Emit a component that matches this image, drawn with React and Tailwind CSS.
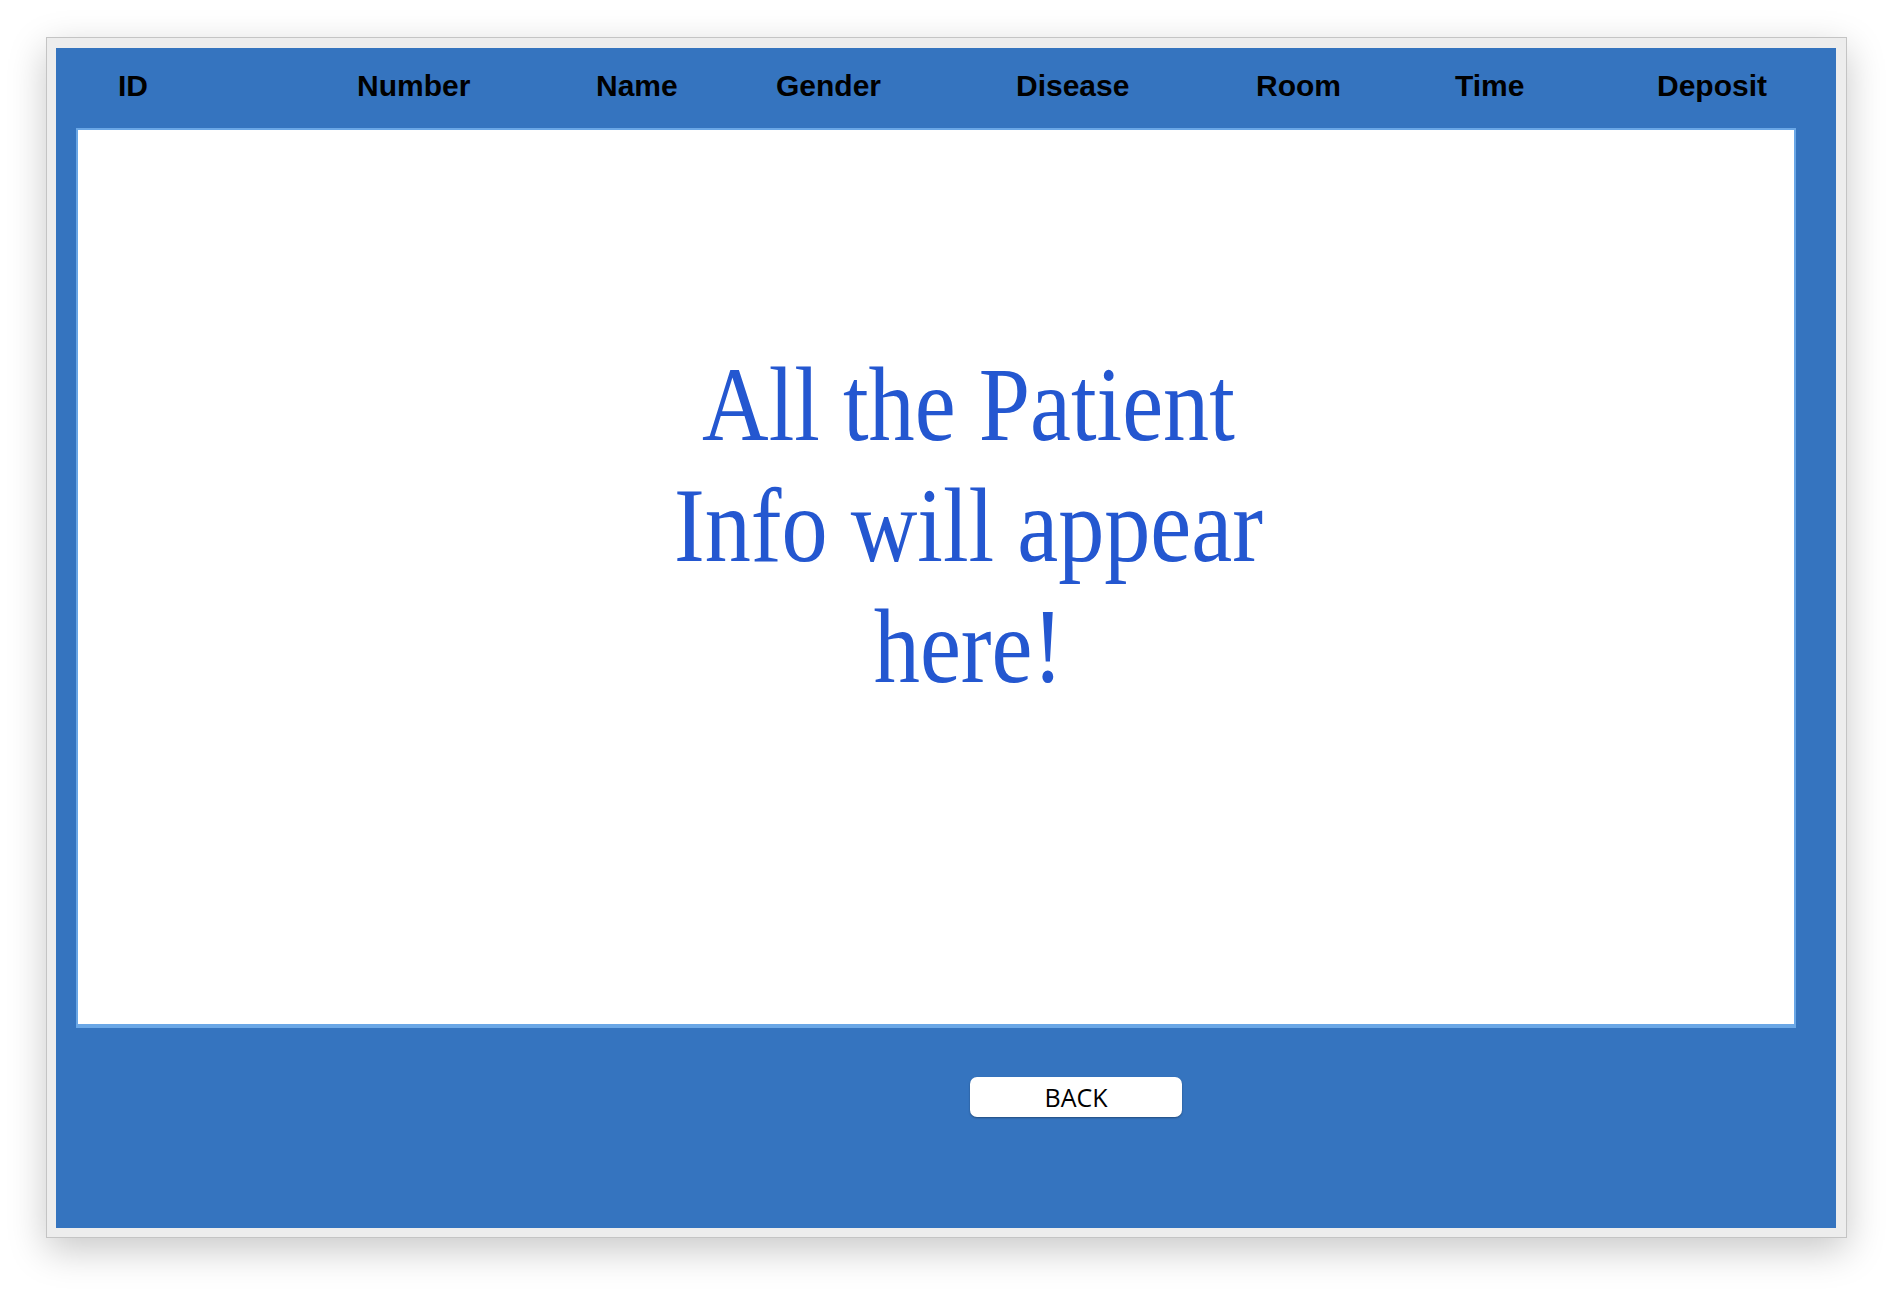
export default function App() {
  const cols = ["ID", "Number", "Name", "Gender", "Disease", "Room", "Time", "Deposit"];
  return (
    <div className="min-h-screen w-full bg-white pl-[46px] pt-[37px]">
      <div className="w-[1801px] h-[1201px] border border-[#c4c4c4] bg-[#ededed] pt-[10px] pl-[9px] shadow-[0_12px_36px_rgba(0,0,0,0.22)]">
        <div className="w-[1780px] h-[1180px] bg-[#3574bf] flex flex-col">
          <div className="h-[80px] pt-[23px] pl-[62px] grid grid-cols-[239px_239px_180px_240px_240px_199px_202px_auto]">
            {cols.map((c) => (
              <div
                key={c}
                className="text-[30px] leading-none font-bold text-black font-['Liberation_Sans',Arial,sans-serif]"
              >
                {c}
              </div>
            ))}
          </div>
          <div className="ml-[20px] w-[1720px] h-[900px] bg-white border-[#6aa7e6] border-t-2 border-l-2 border-r-2 border-b-4 flex flex-col items-center pt-[214px] pl-[64px]">
            <div className="scale-x-[0.87] text-center text-[106px] leading-[121px] text-[#2457d0] font-['Liberation_Serif','Times_New_Roman',serif]">
              <div>All the Patient</div>
              <div>Info will appear</div>
              <div>here!</div>
            </div>
          </div>
          <div className="pl-[914px] pt-[49px]">
            <button className="w-[212px] h-[40px] bg-white rounded-[7px] shadow-[0_1px_2px_rgba(0,0,0,0.35)] flex items-center justify-center text-[25px] leading-none text-black font-['Open_Sans',sans-serif]">
              BACK
            </button>
          </div>
        </div>
      </div>
    </div>
  );
}
